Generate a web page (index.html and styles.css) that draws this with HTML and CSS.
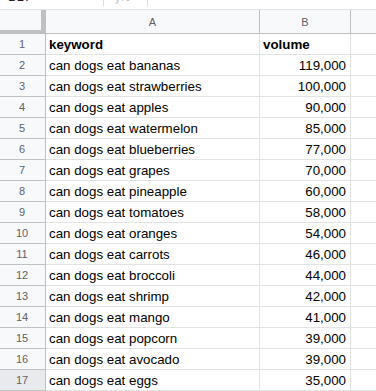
FILE: index.html
```html
<!DOCTYPE html>
<html>
<head>
<meta charset="utf-8">
<link rel="stylesheet" href="styles.css">
</head>
<body>
<div class="topbar">
  <div class="namebox"><span class="ref">B17</span><span class="caret">&#9662;</span></div>
  <div class="fxbox"><span class="fx">fx</span></div>
</div>
<div class="sheet">
  <div class="corner"></div><div class="colhead">A</div><div class="colhead">B</div><div class="colhead last"></div>
  <div class="rowhead">1</div><div class="cell bold">keyword</div><div class="cell bold">volume</div><div class="cell last"></div>
  <div class="rowhead">2</div><div class="cell">can dogs eat bananas</div><div class="cell num">119,000</div><div class="cell last"></div>
  <div class="rowhead">3</div><div class="cell">can dogs eat strawberries</div><div class="cell num">100,000</div><div class="cell last"></div>
  <div class="rowhead">4</div><div class="cell">can dogs eat apples</div><div class="cell num">90,000</div><div class="cell last"></div>
  <div class="rowhead">5</div><div class="cell">can dogs eat watermelon</div><div class="cell num">85,000</div><div class="cell last"></div>
  <div class="rowhead">6</div><div class="cell">can dogs eat blueberries</div><div class="cell num">77,000</div><div class="cell last"></div>
  <div class="rowhead">7</div><div class="cell">can dogs eat grapes</div><div class="cell num">70,000</div><div class="cell last"></div>
  <div class="rowhead">8</div><div class="cell">can dogs eat pineapple</div><div class="cell num">60,000</div><div class="cell last"></div>
  <div class="rowhead">9</div><div class="cell">can dogs eat tomatoes</div><div class="cell num">58,000</div><div class="cell last"></div>
  <div class="rowhead">10</div><div class="cell">can dogs eat oranges</div><div class="cell num">54,000</div><div class="cell last"></div>
  <div class="rowhead">11</div><div class="cell">can dogs eat carrots</div><div class="cell num">46,000</div><div class="cell last"></div>
  <div class="rowhead">12</div><div class="cell">can dogs eat broccoli</div><div class="cell num">44,000</div><div class="cell last"></div>
  <div class="rowhead">13</div><div class="cell">can dogs eat shrimp</div><div class="cell num">42,000</div><div class="cell last"></div>
  <div class="rowhead">14</div><div class="cell">can dogs eat mango</div><div class="cell num">41,000</div><div class="cell last"></div>
  <div class="rowhead">15</div><div class="cell">can dogs eat popcorn</div><div class="cell num">39,000</div><div class="cell last"></div>
  <div class="rowhead">16</div><div class="cell">can dogs eat avocado</div><div class="cell num">39,000</div><div class="cell last"></div>
  <div class="rowhead selected">17</div><div class="cell">can dogs eat eggs</div><div class="cell num">35,000</div><div class="cell last"></div>
</div>
</body>
</html>
```
FILE: styles.css
```css
html, body {
  margin: 0;
  padding: 0;
  background: #ffffff;
  font-family: "Liberation Sans", Arial, sans-serif;
  overflow: hidden;
}

.topbar {
  height: 9px;
  border-bottom: 1px solid #e1e1e1;
  display: flex;
  overflow: hidden;
}

.namebox {
  width: 103px;
  border-right: 1px solid #dadce0;
  height: 6px;
  position: relative;
  overflow: hidden;
}

.ref {
  position: absolute;
  left: 8px;
  top: -10px;
  font-size: 13px;
  line-height: 13px;
  color: #202124;
}

.caret {
  position: absolute;
  left: 90px;
  top: -8px;
  font-size: 9px;
  line-height: 10px;
  color: #9aa0a6;
}

.fxbox {
  width: 43px;
  border-right: 1px solid #dadce0;
  height: 6px;
  position: relative;
  overflow: hidden;
}

.fx {
  position: absolute;
  left: 12px;
  top: -11px;
  font-family: "DejaVu Serif", serif;
  font-style: italic;
  font-size: 15px;
  line-height: 15px;
  color: #bdc1c6;
}

.sheet {
  display: grid;
  grid-template-columns: 46px 214px 91px 1fr;
  grid-template-rows: 24px;
  grid-auto-rows: 21px;
}

.corner {
  background: #f8f9fa;
  border-right: 5px solid #c0c0c0;
  border-bottom: 4px solid #c0c0c0;
  box-sizing: border-box;
}

.colhead {
  background: #f8f9fa;
  border-right: 1px solid #c0c0c0;
  border-bottom: 1px solid #c0c0c0;
  color: #5f6368;
  font-size: 11px;
  display: flex;
  align-items: center;
  justify-content: center;
  padding-top: 1px;
  box-sizing: border-box;
}

.rowhead {
  background: #f8f9fa;
  border-right: 1px solid #c0c0c0;
  border-bottom: 1px solid #c0c0c0;
  color: #5f6368;
  font-size: 11px;
  display: flex;
  align-items: center;
  justify-content: center;
  box-sizing: border-box;
  padding-right: 1px;
}

.rowhead.selected {
  background: #e8eaed;
}

.cell {
  border-right: 1px solid #e2e3e3;
  border-bottom: 1px solid #e2e3e3;
  box-sizing: border-box;
  font-size: 13.33px;
  color: #000000;
  padding: 0 3px;
  display: flex;
  align-items: center;
  white-space: nowrap;
  overflow: hidden;
  padding-top: 1px;
}

.cell.bold {
  font-weight: bold;
}

.cell.num {
  justify-content: flex-end;
  padding-right: 4px;
}

.cell.last {
  border-right: none;
}

.colhead.last {
  border-right: none;
}
```
